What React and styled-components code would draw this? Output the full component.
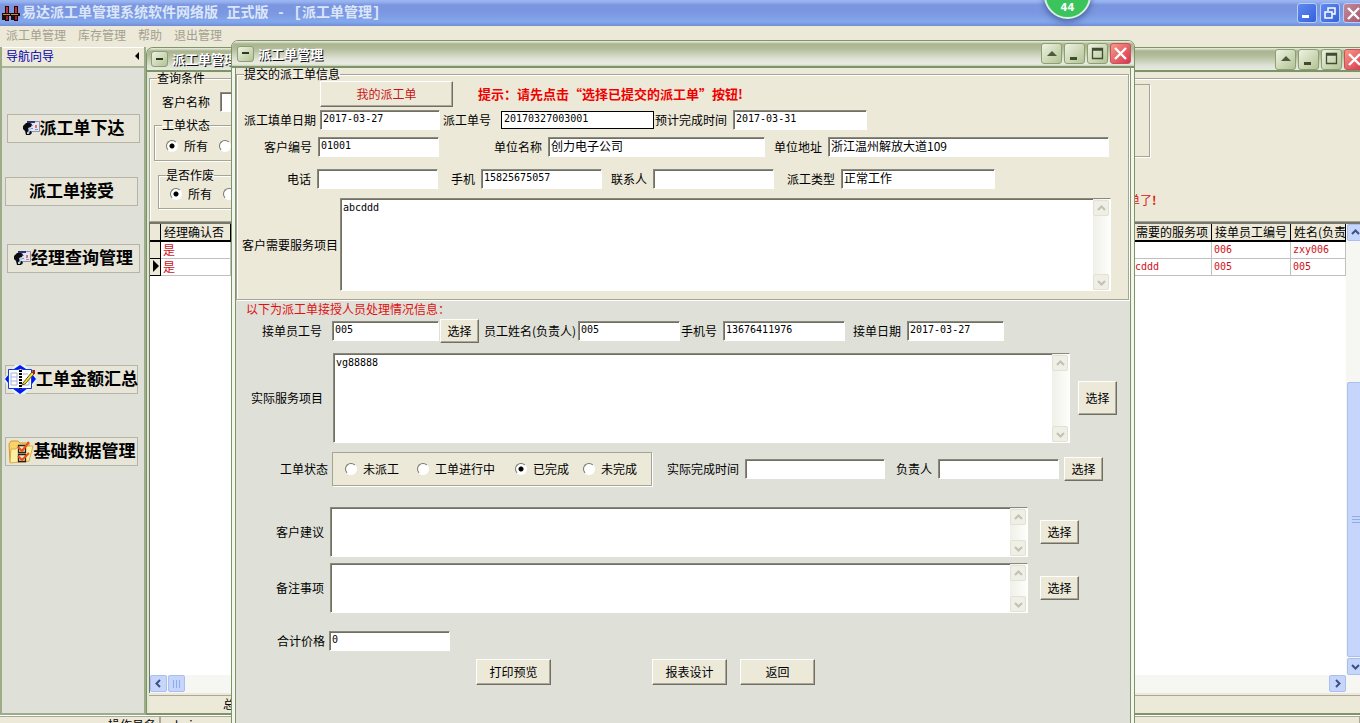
import React from "react";
import styled, { createGlobalStyle, css } from "styled-components";

const Global = createGlobalStyle`
  * { box-sizing: border-box; }
  html, body { margin: 0; height: 100%; overflow: hidden; }
  body, button, input, textarea {
    font-family: "Noto Sans CJK SC", "Liberation Sans", sans-serif;
    font-size: 12px;
    line-height: 16px;
    color: #000;
  }
`;

const beige = "#ece9d8";
const grey = "#dfe0d8";
const olive = "#7d9468";

const Screen = styled.div`
  position: relative;
  display: flex;
  flex-direction: column;
  height: 100vh;
  overflow: hidden;
  background: ${beige};
  white-space: nowrap;
`;

/* ---------- application frame ---------- */

const AppBar = styled.header`
  flex: none;
  display: flex;
  align-items: center;
  gap: 2px;
  height: 26px;
  padding-left: 2px;
  overflow: hidden;
  background: linear-gradient(#9db9f2 0, #94b0ee 2px, #7b95df 5px, #7c98e2 14px, #82a8ea 21px, #7f9fe6 23px, #6f8cd4 26px);
`;

const AppTitle = styled.h1`
  flex: 1;
  margin: 0;
  font: bold 14px/24px "Liberation Mono", "Noto Sans CJK SC", monospace;
  color: #dbe6fa;
`;

const AppButtons = styled.div`
  display: flex;
  gap: 3px;
  margin-right: -3px;
`;

const AppButton = styled.button`
  display: grid;
  place-items: center;
  width: 20px;
  height: 20px;
  padding: 0;
  border: 1px solid #b9cdf6;
  border-radius: 3px;
  background: ${(p) => (p.$close ? "linear-gradient(135deg, #c08a9c, #a8566c)" : "linear-gradient(135deg, #5f8af0, #3561dc)")};
`;

const Bubble = styled.div`
  position: absolute;
  top: -28px;
  right: 269px;
  display: flex;
  align-items: flex-end;
  justify-content: center;
  width: 47px;
  height: 47px;
  padding-bottom: 3px;
  border: 2px solid #d9efe0;
  border-radius: 50%;
  background: #3cc45c;
  box-shadow: 0 3px 6px rgba(40, 60, 120, 0.6);
  color: #fff;
  font: bold 10px/13px "DejaVu Sans", sans-serif;
`;

const MenuBar = styled.nav`
  flex: none;
  display: flex;
  gap: 12px;
  height: 21px;
  padding: 1px 6px;
`;

const MenuLink = styled.a`
  color: #a3a08f;
  text-decoration: none;
`;

const Workspace = styled.main`
  flex: 1;
  display: flex;
  min-height: 0;
`;

/* ---------- navigation ---------- */

const Sidebar = styled.aside`
  flex: none;
  display: flex;
  flex-direction: column;
  width: 146px;
  border: solid #9cac88;
  border-width: 0 2px 2px;
  background: ${grey};
`;

const SideHead = styled.div`
  display: flex;
  justify-content: space-between;
  align-items: center;
  height: 21px;
  padding: 0 5px 2px 4px;
  border-top: 1px solid #fff;
  border-bottom: 2px solid #a8b594;
  background: ${beige};
  color: #0000b4;
`;

const NavList = styled.div`
  display: flex;
  flex-direction: column;
  padding: 46px 4px 0 3px;
`;

const NavButton = styled.button`
  display: flex;
  align-items: center;
  justify-content: center;
  width: 133px;
  height: 29px;
  margin: 0 0 ${(p) => p.$after}px ${(p) => (p.$indent ? 2 : 0)}px;
  padding: 0;
  overflow: visible;
  border: 1px solid #b5b4a8;
  background: #e7e5d8;
  font-size: 17px;
  line-height: 24px;
  font-weight: bold;
  svg { flex: none; }
`;

const NavText = styled.span`
  padding-bottom: 4px;
`;

/* ---------- child windows ---------- */

const windowFrame = css`
  display: flex;
  flex-direction: column;
  border: 1px solid ${olive};
  border-radius: 7px 7px 0 0;
  overflow: hidden;
`;

const BackWindow = styled.section`
  ${windowFrame}
  flex: 1;
  min-width: 0;
  margin-right: -8px;
  padding: 0 2px;
  border-bottom: 2px solid ${olive};
  background: #dfe6d2;
`;

const Dialog = styled.section`
  ${windowFrame}
  position: absolute;
  top: 40px;
  bottom: -10px;
  left: 231px;
  right: 225px;
  padding: 0 3px;
  background: #f3f6ec;
`;

const Caption = styled.header`
  flex: none;
  display: flex;
  align-items: center;
  gap: 4px;
  height: ${(p) => p.$height}px;
  margin: 0 -3px;
  padding: 0 3px 0 5px;
  border-bottom: 2px solid ${olive};
  background: linear-gradient(#eef1e4 0, #a9b48f 3px, #b4bd9c 8px, #dfe3d6 18px, #e9ebe2 23px, #c4ceb2 25px);
`;

const CaptionText = styled.h2`
  flex: 1;
  margin: 0;
  font-size: 13px;
  line-height: 18px;
  font-weight: bold;
  color: #fff;
  text-shadow: 1px 1px 0 #111;
`;

const ButtonStrip = styled.div`
  display: flex;
  gap: 2px;
`;

const CaptionButton = styled.button`
  display: grid;
  place-items: center;
  width: ${(p) => (p.$small ? 17 : 21)}px;
  height: ${(p) => (p.$small ? 16 : 21)}px;
  padding: 0;
  border: 1px solid ${(p) => (p.$close ? "#c0545a" : "#8b9f72")};
  border-radius: 3px;
  background: ${(p) => (p.$close ? "linear-gradient(135deg, #f79a86, #d8344e)" : "linear-gradient(135deg, #eef2e2, #b3c394)")};
`;

const DialogClient = styled.div`
  flex: 1;
  border: 1px solid ${olive};
  border-width: 0 1px;
  background: ${grey};
`;

const TopSection = styled.div`
  padding-right: 1px;
  background: ${beige};
`;

/* ---------- form parts ---------- */

const Group = styled.fieldset`
  min-width: 0;
  margin: ${(p) => p.$margin || 0};
  padding: ${(p) => p.$padding || 0};
  border: 1px solid #a5a595;
  box-shadow: 1px 1px 0 #fff, inset 1px 1px 0 #fff;
`;

const Legend = styled.legend`
  margin-left: 7px;
  padding: 0;
  line-height: 12px;
`;

const Row = styled.div`
  display: flex;
  align-items: center;
  height: ${(p) => p.$height}px;
  margin-top: ${(p) => p.$above || 0}px;
  padding: 0 ${(p) => p.$right || 0}px 0 ${(p) => p.$left || 0}px;
`;

const Label = styled.label`
  flex: none;
  width: ${(p) => p.$width}px;
  padding-right: ${(p) => (p.$gap === undefined ? 6 : p.$gap)}px;
  text-align: right;
`;

const sunken = css`
  border: 1px solid;
  border-color: #8a897e #fff #fff #8a897e;
  box-shadow: inset 1px 1px 0 #716f64;
  background: #fff;
`;

const TextBox = styled.input`
  ${sunken}
  flex: none;
  width: ${(p) => p.$width}px;
  height: 20px;
  padding: 0 2px 3px;
  outline: 0;
  border-radius: 0;
  ${(p) => !p.$cjk && 'font-family: "DejaVu Sans Mono", monospace; font-size: 10px;'}
  ${(p) => p.$plain && "height: 18px; border-color: #000; box-shadow: none;"}
`;

const Memo = styled.div`
  ${sunken}
  flex: 1;
  display: flex;
  height: ${(p) => p.$height}px;
`;

const MemoText = styled.textarea`
  flex: 1;
  min-width: 0;
  padding: 1px 2px;
  border: 0;
  outline: 0;
  resize: none;
  overflow: hidden;
  background: transparent;
  font-family: "DejaVu Sans Mono", monospace;
  font-size: 10px;
`;

const MemoScroll = styled.div`
  display: flex;
  flex-direction: column;
  justify-content: space-between;
  width: 17px;
  padding: 1px 1px 0 0;
  background: linear-gradient(90deg, #f0f0ea, #fdfdfa);
`;

const MemoArrow = styled.span`
  display: grid;
  place-items: center;
  height: 16px;
  border: 1px solid #e2e1d6;
  border-radius: 2px;
  background: #f0efe6;
`;

const PushButton = styled.button`
  flex: none;
  width: ${(p) => p.$width || 39}px;
  height: ${(p) => p.$height || 24}px;
  margin-left: ${(p) => p.$before || 0}px;
  padding: 0;
  border: 1px solid;
  border-color: #fff #716f64 #716f64 #fff;
  box-shadow: inset -1px -1px 0 #aca899;
  background: ${beige};
  color: ${(p) => (p.$red ? "#c81414" : "#000")};
`;

const Hint = styled.strong`
  margin-left: 25px;
  font-size: 13px;
  color: #f00000;
`;

const Note = styled.p`
  margin: 0;
  padding-left: ${(p) => p.$left}px;
  line-height: 18px;
  color: #e01010;
`;

const RadioPanel = styled.div`
  flex: none;
  display: flex;
  align-items: center;
  width: 320px;
  height: 34px;
  padding-left: 12px;
  border: 1px solid #a5a595;
  box-shadow: 1px 1px 0 #fff;
  background: ${beige};
`;

const PanelLabel = styled.span`
  flex: none;
  width: 96px;
  padding-right: 4px;
  text-align: right;
`;

const Option = styled.label`
  flex: none;
  display: flex;
  align-items: center;
  gap: 6px;
  width: ${(p) => p.$width}px;
`;

const RadioDot = styled.input`
  flex: none;
  appearance: none;
  width: 12px;
  height: 12px;
  margin: 0;
  border: 1px solid;
  border-color: #77766a #fff #fff #77766a;
  border-radius: 50%;
  background: #fff;
  &:checked { background: radial-gradient(circle, #000 0, #000 2px, #fff 3px); }
`;

/* ---------- query window ---------- */

const BackClient = styled.div`
  flex: 1;
  display: flex;
  flex-direction: column;
  min-height: 0;
  background: ${beige};
`;

const QueryBody = styled.div`
  display: flex;
  justify-content: space-between;
  height: 137px;
`;

const QueryLeft = styled.div`
  width: 220px;
  padding-left: 4px;
`;

const QueryRight = styled.div`
  width: 260px;
`;

const EmptyFrame = styled.div`
  width: 46px;
  height: 73px;
  margin-bottom: 34px;
  border: 1px solid #a5a595;
  box-shadow: 1px 1px 0 #fff;
`;

const GridPane = styled.div`
  flex: 1;
  display: flex;
  min-height: 0;
  border-top: 2px solid #77766a;
  border-left: 1px solid #77766a;
`;

const GridBody = styled.div`
  flex: 1;
  display: flex;
  flex-direction: column;
  min-width: 0;
  background: #fff;
`;

const Table = styled.table`
  width: 100%;
  table-layout: fixed;
  border-collapse: separate;
  border-spacing: 0;
  line-height: 14px;
`;

const Th = styled.th`
  width: ${(p) => (p.$width ? p.$width + "px" : "auto")};
  height: 18px;
  padding: 0 0 0 3px;
  overflow: hidden;
  border: 1px solid #000;
  border-width: 0 1px 2px 0;
  background: ${beige};
  font-weight: normal;
  text-align: left;
`;

const Td = styled.td`
  height: 17px;
  padding: 0 0 0 ${(p) => (p.$mark ? 3 : 2)}px;
  overflow: hidden;
  border: 1px solid #c0c0c0;
  border-width: 0 1px 1px 0;
  color: #d01018;
  ${(p) => p.$num && 'font-family: "DejaVu Sans Mono", monospace; font-size: 10px;'}
  ${(p) => p.$mark && `background: ${beige}; border-color: #000;`}
`;

const HScroll = styled.div`
  display: flex;
  gap: 1px;
  height: 18px;
  margin-top: auto;
  background: #f6f6f2;
`;

const VScroll = styled.div`
  display: flex;
  flex-direction: column;
  gap: 1px;
  width: 19px;
  padding: 0 0 18px 1px;
  background: #f6f6f2;
`;

const ScrollPiece = styled.span`
  flex: none;
  display: grid;
  place-items: center;
  width: 17px;
  height: 17px;
  ${(p) => p.$grow && "flex: 0 1 275px;"}
  margin-top: ${(p) => (p.$grow ? "auto" : 0)};
  margin-left: ${(p) => (p.$end ? "auto" : 0)};
  border: 1px solid #a9bff0;
  border-radius: 2px;
  background: #c5d5fb;
`;

const TotalBar = styled.footer`
  flex: none;
  height: 18px;
  margin-top: 2px;
  padding: 0 0 0 74px;
  border-top: 1px solid #aca899;
  overflow: hidden;
`;

const StatusBar = styled.footer`
  flex: none;
  display: flex;
  height: 8px;
  overflow: hidden;
  border-top: 1px solid #fff;
`;

const StatusCell = styled.div`
  flex: ${(p) => (p.$width ? "none" : 1)};
  width: ${(p) => (p.$width ? p.$width + "px" : "auto")};
  height: 20px;
  padding: 0 3px;
  border: 1px solid #aca899;
  border-width: 1px 1px 0 ${(p) => (p.$width ? 0 : 1)}px;
  text-align: ${(p) => (p.$width ? "right" : "left")};
`;

/* ---------- drawings ---------- */

const Chevron = ({ dir, color = "#3d5185" }) => {
  const d = { up: "M1 6 4.500 2.500 8 6", down: "M1 3 4.500 6.500 8 3", left: "M6 1 2.500 4.500 6 8", right: "M3 1 6.500 4.500 3 8" }[dir];
  return (
    <svg width="9" height="9" viewBox="0 0 9 9">
      <path d={d} fill="none" stroke={color} strokeWidth="2" />
    </svg>
  );
};

const Cross = () => (
  <svg width="15" height="15" viewBox="0 0 15 15">
    <path d="M2 2 13 13M13 2 2 13" stroke="#fff" strokeWidth="2.4" />
  </svg>
);

const AppLogo = () => (
  <svg width="18" height="18" viewBox="0 0 18 18">
    <path d="M3 2h4v15H3zM12 2h4v15h-4z" fill="#1c0a0a" />
    <path d="M4 3h2v7H4zM13 3h2v7h-2z" fill="#c03038" />
    <path d="M0 9h18v3H0z" fill="#1c0a0a" />
    <path d="M1 10h7v1H1zM9 10h7v1H9z" fill="#c09038" />
    <path d="M0 12h3v4H0zM9 12h3v4H9z" fill="#20100c" />
    <path d="M4 12h2v4H4zM13 12h2v4h-2z" fill="#a02028" />
  </svg>
);

const HandCard = () => (
  <svg width="17" height="17" viewBox="0 0 17 17">
    <path d="M5.500 1.500h11v10h-11z" fill="#e4e6f2" stroke="#8d92b4" />
    <path d="M4 1h8v2H4z" fill="#2a3486" />
    <path d="M12 5h2v3h-2z" fill="#d07a70" />
    <path d="M8 5h2v1H8zM8 8h2v1H8zM12 9h3v1h-3z" fill="#8a90b0" />
    <path d="M0 6l3-3h4l2 1-1 3-2 1-1 4 3-1 1 2-2 2H3l-1-4-2-2z" fill="#0c0c10" />
    <path d="M5 8l3-1v3l-2 1zM4 12l3-1-1 3H4z" fill="#b4cdf0" />
  </svg>
);

const NoteBook = () => (
  <svg width="31" height="29" viewBox="0 0 31 29">
    <path d="M10 0h10l6 6 5 6v5l-5 6-6 6H10l-5-6-5-6v-5l5-6z" fill="#e6f4fb" />
    <path d="M15 0l6 4H9zM15 29l8-6H7zM0 14l4-5v10zM31 14l-4-5v10z" fill="#0018f4" />
    <path d="M3.500 4.500h10l2 1 2-1h9v19h-9l-2 1-2-1h-10z" fill="#fff" stroke="#1638d8" />
    <path d="M15.500 5v19" stroke="#000" strokeWidth="3" strokeDasharray="2 1" />
    <path d="M6 8h6v12H6zM6 12h6M6 16h6M18 9h5M18 20h6v-6" fill="none" stroke="#a4b4e0" />
    <path d="M18 18 27 7l2 2-9 10-3 1z" fill="#f6e030" stroke="#5c5418" />
    <path d="M27 5h3v4h-2z" fill="#982030" />
  </svg>
);

const FolderChecks = () => (
  <svg width="26" height="24" viewBox="0 0 26 24">
    <path d="M1 4l2-3h7l2 2h9v18l-4 1H2z" fill="#f8d468" stroke="#cf982c" />
    <path d="M3 9h5l2-3h15l-4 15-19 2z" fill="#fdf0a4" stroke="#dcae48" />
    <path d="M10.500 5.500h7v7h-7zM10.500 14.500h7v7h-7z" fill="#fbe8b8" stroke="#222" strokeWidth="1.300" />
    <path d="M10 7l4 4 7-9M10 16l4 4 7-7" fill="none" stroke="#e8501c" strokeWidth="2.200" />
  </svg>
);

const captionGlyphs = {
  roll: <path d="M2 9l5-5 5 5z" fill="#4c5a3e" />,
  min: <path d="M2 10h7v3H2z" fill="#3e4c30" />,
  max: <path d="M1.500 1.500h10v10h-10zM2 3h9" fill="none" stroke="#3e4c30" strokeWidth="1.300" />,
};

const CaptionButtons = () => (
  <ButtonStrip>
    {Object.entries(captionGlyphs).map(([name, glyph]) => (
      <CaptionButton key={name} aria-label={name}>
        <svg width="14" height="14" viewBox="0 0 14 14">{glyph}</svg>
      </CaptionButton>
    ))}
    <CaptionButton $close aria-label="close"><Cross /></CaptionButton>
  </ButtonStrip>
);

const WindowCaption = ({ title, height }) => (
  <Caption $height={height}>
    <CaptionButton $small aria-label="menu">
      <svg width="9" height="9" viewBox="0 0 9 9"><path d="M1 3h7v2H1z" fill="#2c3a20" /></svg>
    </CaptionButton>
    <CaptionText>{title}</CaptionText>
    <CaptionButtons />
  </Caption>
);

const Field = ({ id, label, labelWidth, gap, ...box }) => (
  <>
    <Label htmlFor={id} $width={labelWidth} $gap={gap}>{label}</Label>
    <TextBox id={id} {...box} />
  </>
);

const MemoField = ({ id, label, labelWidth, gap, height, value = "" }) => (
  <>
    <Label htmlFor={id} $width={labelWidth} $gap={gap}>{label}</Label>
    <Memo $height={height}>
      <MemoText id={id} defaultValue={value} spellCheck={false} />
      <MemoScroll>
        <MemoArrow><Chevron dir="up" color="#c2c1b4" /></MemoArrow>
        <MemoArrow><Chevron dir="down" color="#c2c1b4" /></MemoArrow>
      </MemoScroll>
    </Memo>
  </>
);

const Radio = ({ name, label, width, checked }) => (
  <Option $width={width}>
    <RadioDot type="radio" name={name} defaultChecked={checked} />
    {label}
  </Option>
);

/* ---------- screens ---------- */

const Navigation = () => (
  <Sidebar>
    <SideHead>
      导航向导
      <svg width="4" height="8" viewBox="0 0 4 8"><path d="M4 0v8L0 4z" /></svg>
    </SideHead>
    <NavList>
      <NavButton $indent $after={34}><HandCard /><NavText>派工单下达</NavText></NavButton>
      <NavButton $after={38}><NavText>派工单接受</NavText></NavButton>
      <NavButton $indent $after={92}><HandCard /><NavText>经理查询管理</NavText></NavButton>
      <NavButton $after={43}><NoteBook /><NavText>工单金额汇总</NavText></NavButton>
      <NavButton $after={0}><FolderChecks /><NavText>基础数据管理</NavText></NavButton>
    </NavList>
  </Sidebar>
);

const QueryWindow = () => (
  <BackWindow>
    <WindowCaption title="派工单管理" height={24} />
    <BackClient>
      <Group>
        <Legend>查询条件</Legend>
        <QueryBody>
          <QueryLeft>
            <Row $height={35}>
              <Field id="qname" label="客户名称" labelWidth={66} gap={10} $width={120} />
            </Row>
            <Group $padding="7px 0">
              <Legend>工单状态</Legend>
              <Row $height={15} $left={11}>
                <Radio name="qstate" label="所有" width={53} checked />
                <Radio name="qstate" width={20} />
              </Row>
            </Group>
            <Group $margin="8px 0 0 4px" $padding="5px 0 7px">
              <Legend>是否作废</Legend>
              <Row $height={15} $left={11}>
                <Radio name="qvoid" label="所有" width={53} checked />
                <Radio name="qvoid" width={20} />
              </Row>
            </Group>
          </QueryLeft>
          <QueryRight>
            <EmptyFrame />
            <Note $left={24}>单了<b>!</b></Note>
          </QueryRight>
        </QueryBody>
      </Group>
      <GridPane>
        <GridBody>
          <Table>
            <thead>
              <tr>
                <Th $width={11} />
                <Th $width={70}>经理确认否</Th>
                <Th />
                <Th $width={79}>需要的服务项</Th>
                <Th $width={79}>接单员工编号</Th>
                <Th $width={55}>姓名(负责</Th>
              </tr>
            </thead>
            <tbody>
              <tr>
                <Td $mark /><Td>是</Td><Td /><Td /><Td $num>006</Td><Td $num>zxy006</Td>
              </tr>
              <tr>
                <Td $mark><svg width="6" height="12" viewBox="0 0 6 12"><path d="M0 0v12l6-6z" /></svg></Td>
                <Td>是</Td><Td /><Td $num>cddd</Td><Td $num>005</Td><Td $num>005</Td>
              </tr>
            </tbody>
          </Table>
          <HScroll>
            <ScrollPiece><Chevron dir="left" /></ScrollPiece>
            <ScrollPiece>
              <svg width="10" height="8"><path d="M1.500 0v8M4.500 0v8M7.500 0v8" stroke="#8fabea" /></svg>
            </ScrollPiece>
            <ScrollPiece $end><Chevron dir="right" /></ScrollPiece>
          </HScroll>
        </GridBody>
        <VScroll>
          <ScrollPiece><Chevron dir="up" /></ScrollPiece>
          <ScrollPiece $grow>
            <svg width="8" height="10"><path d="M0 1.500h8M0 4.500h8M0 7.500h8" stroke="#8fabea" /></svg>
          </ScrollPiece>
          <ScrollPiece><Chevron dir="down" /></ScrollPiece>
        </VScroll>
      </GridPane>
      <TotalBar>总</TotalBar>
    </BackClient>
  </BackWindow>
);

const OrderDialog = () => (
  <Dialog>
    <WindowCaption title="派工单管理" height={27} />
    <DialogClient>
      <TopSection>
        <Group $padding="0 0 7px">
          <Legend>提交的派工单信息</Legend>
          <Row $height={27}>
            <PushButton $width={133} $height={26} $before={83} $red>我的派工单</PushButton>
            <Hint>提示：请先点击“选择已提交的派工单”按钮!</Hint>
          </Row>
          <Row $height={26}>
            <Field id="fdate" label="派工填单日期" labelWidth={83} gap={4} $width={120} defaultValue="2017-03-27" />
            <Field id="fno" label="派工单号" labelWidth={61} gap={10} $width={153} $plain defaultValue="20170327003001" />
            <Field id="fdue" label="预计完成时间" labelWidth={79} $width={134} defaultValue="2017-03-31" />
          </Row>
          <Row $height={28}>
            <Field id="cno" label="客户编号" labelWidth={81} $width={121} defaultValue="01001" />
            <Field id="cname" label="单位名称" labelWidth={109} $width={217} $cjk defaultValue="创力电子公司" />
            <Field id="caddr" label="单位地址" labelWidth={63} $width={281} $cjk defaultValue="浙江温州解放大道109" />
          </Row>
          <Row $height={36}>
            <Field id="tel" label="电话" labelWidth={80} $width={121} />
            <Field id="mob" label="手机" labelWidth={43} $width={121} defaultValue="15825675057" />
            <Field id="who" label="联系人" labelWidth={51} $width={121} />
            <Field id="kind" label="派工类型" labelWidth={67} $width={154} $cjk defaultValue="正常工作" />
          </Row>
          <Row $height={95} $right={17}>
            <MemoField id="need" label="客户需要服务项目" labelWidth={103} gap={2} height={93} value="abcddd" />
          </Row>
        </Group>
      </TopSection>
      <Note $left={10}>以下为派工单接授人员处理情况信息：</Note>
      <Row $height={26}>
        <Field id="eno" label="接单员工号" labelWidth={96} gap={10} $width={107} defaultValue="005" />
        <PushButton $before={1}>选择</PushButton>
        <Field id="ename" label="员工姓名(负责人)" labelWidth={99} gap={2} $width={102} defaultValue="005" />
        <Field id="emob" label="手机号" labelWidth={43} $width={122} defaultValue="13676411976" />
        <Field id="edate" label="接单日期" labelWidth={62} $width={97} defaultValue="2017-03-27" />
      </Row>
      <Row $height={108} $right={13}>
        <MemoField id="done" label="实际服务项目" labelWidth={97} gap={10} height={90} value="vg88888" />
        <PushButton $height={34} $before={8}>选择</PushButton>
      </Row>
      <Row $height={34}>
        <PanelLabel>工单状态</PanelLabel>
        <RadioPanel role="radiogroup" aria-label="工单状态">
          <Radio name="state" label="未派工" width={72} />
          <Radio name="state" label="工单进行中" width={98} />
          <Radio name="state" label="已完成" width={68} checked />
          <Radio name="state" label="未完成" width={64} />
        </RadioPanel>
        <Field id="fin" label="实际完成时间" labelWidth={93} $width={140} />
        <Field id="boss" label="负责人" labelWidth={53} $width={121} />
        <PushButton $before={5}>选择</PushButton>
      </Row>
      <Row $height={56} $above={18} $right={51}>
        <MemoField id="advice" label="客户建议" labelWidth={94} height={50} />
        <PushButton $before={12}>选择</PushButton>
      </Row>
      <Row $height={56} $right={51}>
        <MemoField id="memo" label="备注事项" labelWidth={94} height={50} />
        <PushButton $before={12}>选择</PushButton>
      </Row>
      <Row $height={26} $above={12}>
        <Field id="sum" label="合计价格" labelWidth={93} gap={4} $width={121} defaultValue="0" />
      </Row>
      <Row $height={36}>
        <PushButton $width={75} $height={26} $before={240}>打印预览</PushButton>
        <PushButton $width={75} $height={26} $before={101}>报表设计</PushButton>
        <PushButton $width={75} $height={26} $before={13}>返回</PushButton>
      </Row>
    </DialogClient>
  </Dialog>
);

export default function App() {
  return (
    <Screen>
      <Global />
      <AppBar>
        <AppLogo />
        <AppTitle>易达派工单管理系统软件网络版 正式版 - [派工单管理]</AppTitle>
        <AppButtons>
          <AppButton aria-label="minimize">
            <svg width="12" height="12"><path d="M1 8h7v3H1z" fill="#fff" /></svg>
          </AppButton>
          <AppButton aria-label="restore">
            <svg width="12" height="12"><path d="M4 4V1h7v6H8M1 5h7v6H1z" fill="none" stroke="#fff" strokeWidth="1.500" /></svg>
          </AppButton>
          <AppButton $close aria-label="exit"><Cross /></AppButton>
        </AppButtons>
      </AppBar>
      <MenuBar>
        <MenuLink href="#orders">派工单管理</MenuLink>
        <MenuLink href="#stock">库存管理</MenuLink>
        <MenuLink href="#help">帮助</MenuLink>
        <MenuLink href="#exit">退出管理</MenuLink>
      </MenuBar>
      <Workspace>
        <Navigation />
        <QueryWindow />
      </Workspace>
      <StatusBar>
        <StatusCell $width={160}>操作员名</StatusCell>
        <StatusCell>admin</StatusCell>
      </StatusBar>
      <OrderDialog />
      <Bubble>44</Bubble>
    </Screen>
  );
}
